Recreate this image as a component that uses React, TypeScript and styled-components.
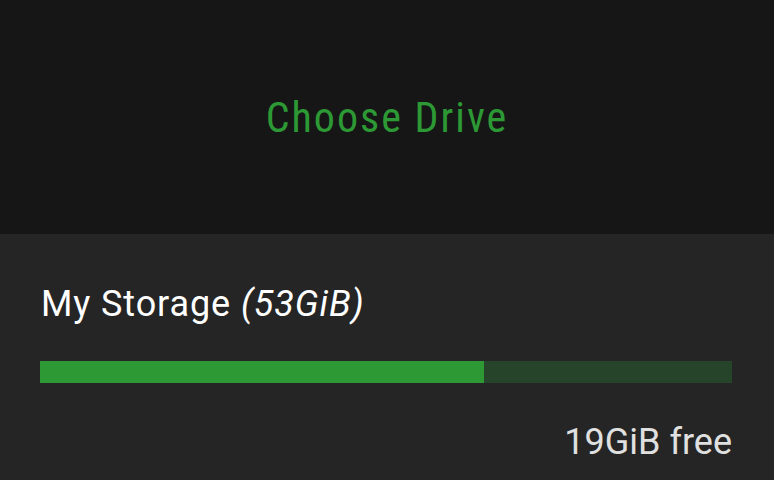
import styled, { createGlobalStyle } from 'styled-components'

const GlobalStyle = createGlobalStyle`
  html, body {
    margin: 0;
    padding: 0;
    background: #252525;
  }
  * {
    box-sizing: border-box;
  }
`

const GREEN = '#2c9935'

const Page = styled.div`
  width: 774px;
  height: 480px;
  display: flex;
  flex-direction: column;
  font-family: Roboto, 'Liberation Sans', sans-serif;
`

const Header = styled.header`
  height: 234px;
  background: #161616;
  display: flex;
  align-items: center;
  justify-content: center;
`

const Title = styled.h1`
  margin: 0;
  font-family: 'Roboto Condensed', Roboto, sans-serif;
  font-stretch: condensed;
  font-weight: 400;
  font-size: 42px;
  letter-spacing: 2px;
  color: ${GREEN};
`

const Drive = styled.section`
  flex: 1;
  background: #252525;
  padding: 46px 42px 0 40px;
  display: flex;
  flex-direction: column;
`

const Label = styled.div`
  font-size: 36px;
  line-height: 48px;
  letter-spacing: 0.9px;
  color: #ffffff;
  padding-left: 1px;

  em {
    font-style: italic;
  }
`

const Track = styled.div`
  margin-top: 33px;
  height: 22px;
  background: #264429;
`

const Fill = styled.div`
  height: 100%;
  background: ${GREEN};
`

const Free = styled.div`
  margin-top: 39px;
  text-align: right;
  font-size: 36px;
  line-height: 40px;
  color: #e0e0e0;
`

export default function App() {
  const total = 53
  const free = 19
  const used = ((total - free) / total) * 100

  return (
    <Page>
      <GlobalStyle />
      <Header>
        <Title>Choose Drive</Title>
      </Header>
      <Drive>
        <Label>
          My Storage <em>({total}GiB)</em>
        </Label>
        <Track>
          <Fill style={{ width: `${used}%` }} />
        </Track>
        <Free>{free}GiB free</Free>
      </Drive>
    </Page>
  )
}
